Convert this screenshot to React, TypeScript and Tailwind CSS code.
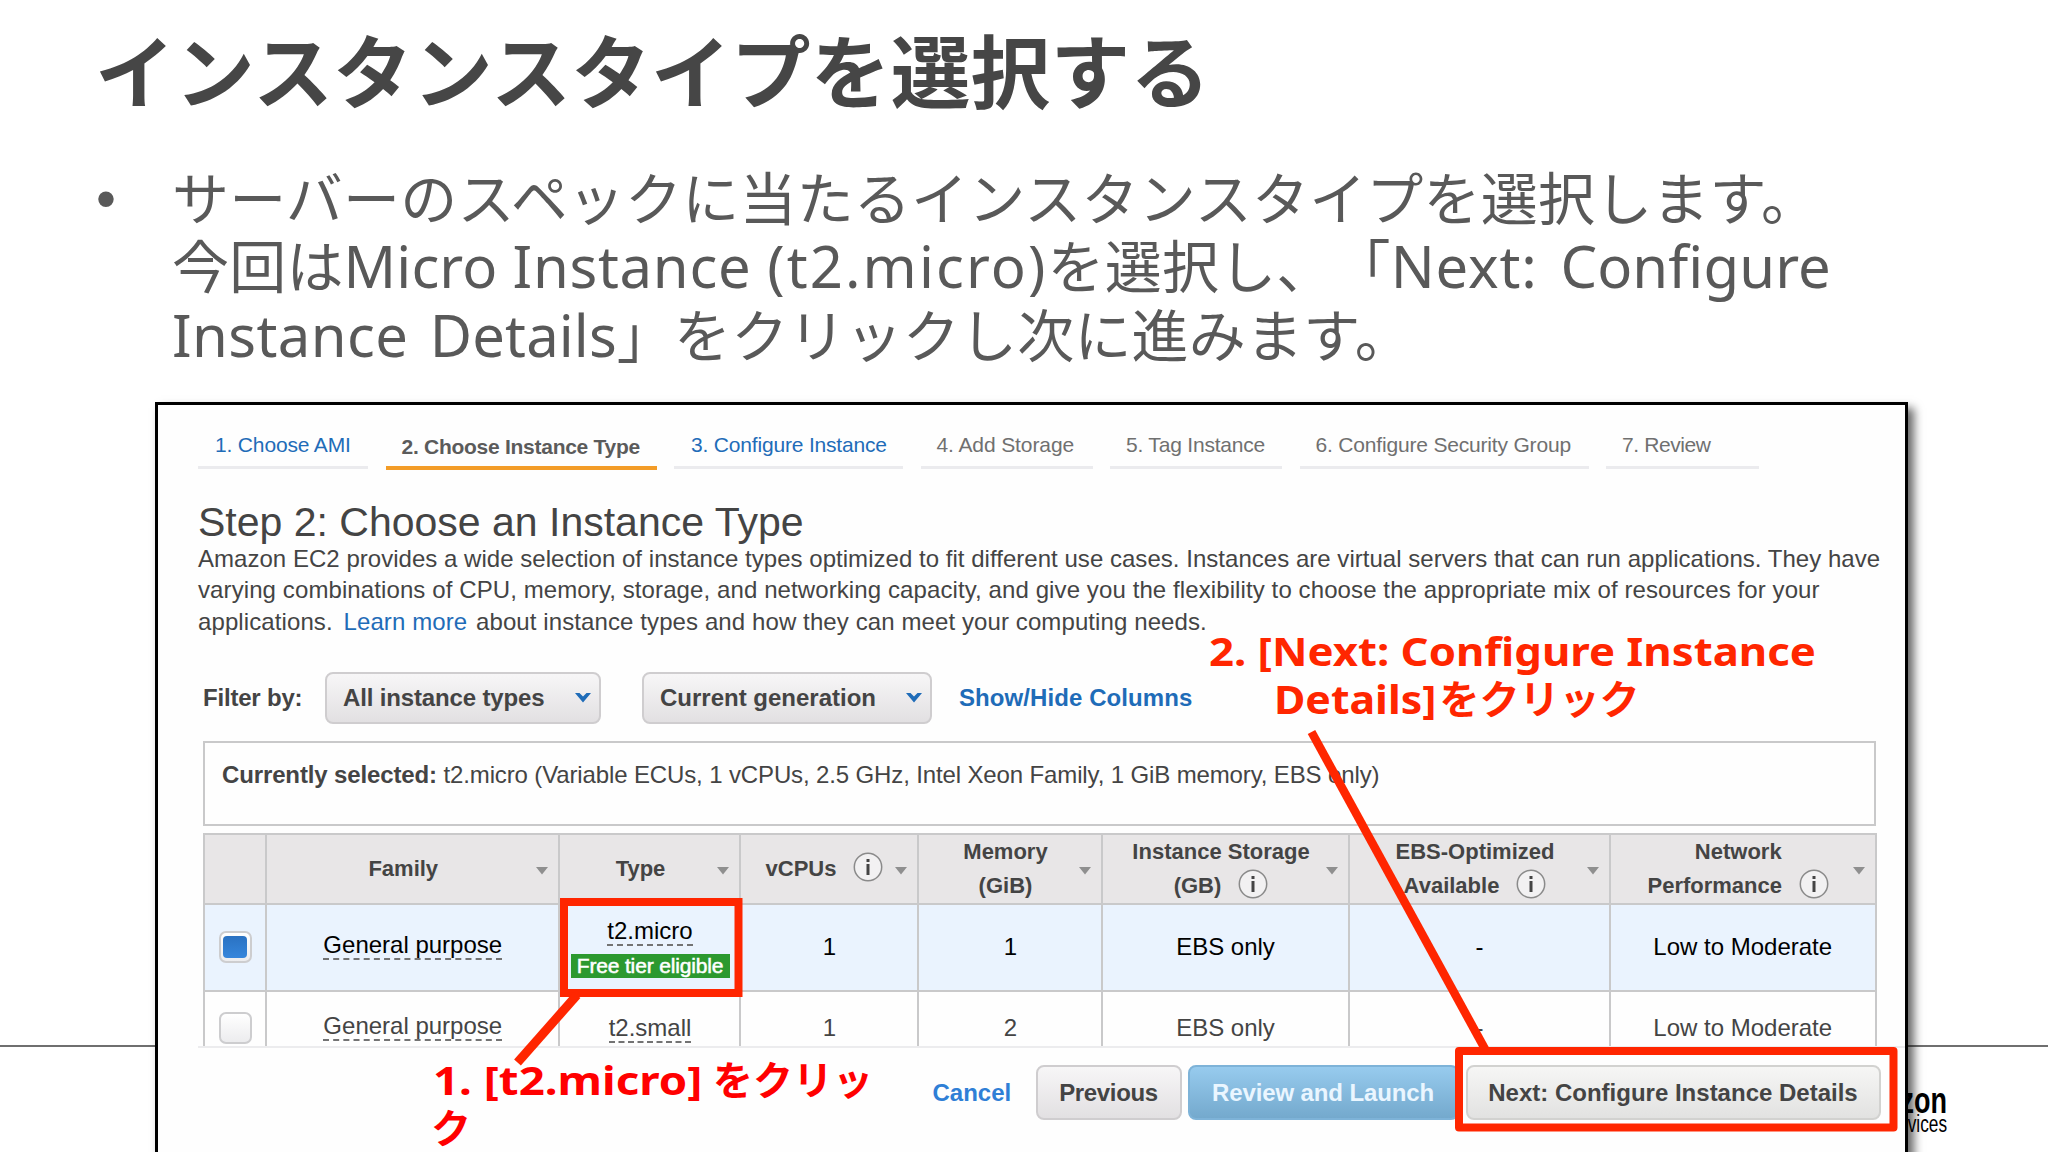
import { ReactNode } from "react";

const TABS = [
  { label: "1. Choose AMI", box: "w-[170px] pl-[17px]", text: "text-[#1f6cb8] tracking-[-0.16px]" },
  { label: "2. Choose Instance Type", box: "w-[271px] pl-[16px]", text: "text-[#5b5b5b] font-bold tracking-[-0.27px]", active: true },
  { label: "3. Configure Instance", box: "w-[229px] pl-[17px]", text: "text-[#1f6cb8] tracking-[-0.18px]" },
  { label: "4. Add Storage", box: "w-[172px] pl-[16px]", text: "text-[#707070] tracking-[-0.1px]" },
  { label: "5. Tag Instance", box: "w-[172px] pl-[16px]", text: "text-[#707070] tracking-[-0.2px]" },
  { label: "6. Configure Security Group", box: "w-[289px] pl-[16px]", text: "text-[#707070] tracking-[-0.18px]" },
  { label: "7. Review", box: "w-[153px] pl-[16px]", text: "text-[#707070] tracking-[-0.4px]" },
];

const GRID = "grid grid-cols-[62px_293.5px_181px_178px_184px_247px_261px_265.5px]";
const CELL = "border-r-2 border-[#c9c9ca]";
const BTN = "flex items-center justify-center rounded-[8px] pt-[1px] font-bold";
const GREY_BTN = "border-2 border-[#cfcdcf] bg-linear-to-b from-[#f7f6f7] to-[#e2e0e2] text-[#444]";

type Row = { family: string; type: string; free?: boolean; cpus: string; memory: string; storage: string; ebs: string; network: string };

const ROWS: Row[] = [
  { family: "General purpose", type: "t2.micro", free: true, cpus: "1", memory: "1", storage: "EBS only", ebs: "-", network: "Low to Moderate" },
  { family: "General purpose", type: "t2.small", cpus: "1", memory: "2", storage: "EBS only", ebs: "-", network: "Low to Moderate" },
];

function Info() {
  return (
    <svg className="-mt-[3px] ml-[17px] h-[30px] w-[30px] shrink-0" viewBox="0 0 30 30">
      <circle cx="15" cy="15" r="13.7" fill="#f2f1f2" stroke="#8a8a8a" strokeWidth="1.5" />
      <rect x="13.5" y="7" width="3" height="3" fill="#444" />
      <rect x="13.5" y="12" width="3" height="11" fill="#444" />
    </svg>
  );
}

function Caret() {
  return (
    <svg className="h-[10px] w-[16px] shrink-0" viewBox="0 0 16 10">
      <path d="M0 0H4.5L8 3.5L11.5 0H16L8 9.5Z" fill="#1f6cb8" />
    </svg>
  );
}

function Head({ lines, info }: { lines: string[]; info?: boolean }) {
  const pad = lines.length === 1 && !info ? "pr-[18px]" : "pr-[9px]";
  return (
    <div className={`${CELL} ${pad} relative flex flex-col items-center justify-center text-[22px] leading-[34px] font-bold text-[#444]`}>
      {lines.map((line, i) => (
        <div key={line} className="flex h-[34px] items-center whitespace-nowrap">
          {line}
          {info && i === lines.length - 1 && <Info />}
        </div>
      ))}
      <svg className="absolute top-[32px] right-[10px] h-[8px] w-[12px]" viewBox="0 0 12 8">
        <path d="M0 0H12L6 7.5Z" fill="#8f8f8f" />
      </svg>
    </div>
  );
}

function Dashed({ children }: { children: ReactNode }) {
  return <span className="border-b-2 border-dashed border-[#737373] leading-[26px]">{children}</span>;
}

function Checkbox({ checked }: { checked?: boolean }) {
  return (
    <span className="ml-[1px] flex h-[32px] w-[33px] items-center justify-center rounded-[7px] border-2 border-[#cdcdcf] bg-linear-to-b from-white to-[#ececee]">
      {checked && <span className="h-[22px] w-[24px] rounded-[4px] bg-linear-to-b from-[#2a72c2] to-[#3686dc]" />}
    </span>
  );
}

function InstanceRow({ row }: { row: Row }) {
  const center = `${CELL} flex items-center justify-center whitespace-nowrap`;
  return (
    <div className={`${GRID} ${row.free ? "h-[87px] border-b-2 border-[#c9c9ca] bg-[#eaf3fe] text-black" : "h-[72px] text-[#444]"}`}>
      <div className={center}>
        <Checkbox checked={row.free} />
      </div>
      <div className={`${center} pb-[2px] pl-[1px]`}>
        <Dashed>{row.family}</Dashed>
      </div>
      <div className={`${CELL} flex flex-col items-center justify-center pt-[2px] pl-[1px]`}>
        <Dashed>{row.type}</Dashed>
        {row.free && (
          <span className="mt-[8px] h-[24px] w-[159px] bg-[#2c992f] text-center text-[21px] leading-[24px] tracking-[-0.16px] text-white [-webkit-text-stroke:0.5px_white]">
            Free tier eligible
          </span>
        )}
      </div>
      <div className={`${center} pl-[1px]`}>{row.cpus}</div>
      <div className={`${center} pl-[1px]`}>{row.memory}</div>
      <div className={center}>{row.storage}</div>
      <div className={center}>{row.ebs}</div>
      <div className={center}>{row.network}</div>
    </div>
  );
}

function Console() {
  return (
    <div className="relative mt-[32.5px] ml-[155px] h-[800px] w-[1753px] shrink-0 border-3 border-black bg-[#fefefe] pt-[23px] pl-[40px] font-['Liberation_Sans',sans-serif] text-[24px] text-[#444] shadow-[6px_6px_9px_rgba(0,0,0,0.6)]">
      <ul className="flex items-start gap-[17.5px] text-[21px] whitespace-nowrap">
        {TABS.map((tab) => (
          <li
            key={tab.label}
            className={`${tab.box} ${tab.text} ${tab.active ? "h-[42px] border-b-4 border-[#f39c27] pt-[1px] leading-[35px]" : "h-[41px] border-b-3 border-[#ebebee] leading-[33px]"}`}
          >
            {tab.label}
          </li>
        ))}
      </ul>

      <h2 className="mt-[31px] text-[41px] leading-[42px]">Step 2: Choose an Instance Type</h2>
      <p className="leading-[31.7px] tracking-[0.03px] whitespace-nowrap">
        Amazon EC2 provides a wide selection of instance types optimized to fit different use cases. Instances are virtual servers that can run applications. They have
        <br />
        <span className="tracking-[0.1px]">
          varying combinations of CPU, memory, storage, and networking capacity, and give you the flexibility to choose the appropriate mix of resources for your
        </span>
        <br />
        <span className="tracking-[0.1px]">
          applications. <span className="mr-[2px] ml-[4px] text-[#1f6cb8]">Learn more</span> about instance types and how they can meet your computing needs.
        </span>
      </p>

      <div className="mt-[34px] flex h-[52px] items-center pl-[5px] font-bold whitespace-nowrap">
        <span className="w-[122px] pt-[1px] tracking-[-0.2px]">Filter by:</span>
        <div className={`${GREY_BTN} flex h-full w-[276px] items-center justify-between rounded-[8px] pr-[8px] pl-[16px] tracking-[-0.15px]`}>
          <span className="pt-[1px]">All instance types</span>
          <Caret />
        </div>
        <div className={`${GREY_BTN} ml-[41px] flex h-full w-[290px] items-center justify-between rounded-[8px] pr-[8px] pl-[16px]`}>
          <span className="pt-[1px]">Current generation</span>
          <Caret />
        </div>
        <span className="ml-[27px] pt-[1px] tracking-[0.08px] text-[#1f6cb8]">Show/Hide Columns</span>
      </div>

      <div className="mt-[17px] ml-[5px] h-[85px] w-[1673px] border-2 border-[#c9c9ca] pt-[16px] pl-[17px] leading-[32px] tracking-[-0.13px] whitespace-nowrap">
        <b>Currently selected:</b> t2.micro (Variable ECUs, 1 vCPUs, 2.5 GHz, Intel Xeon Family, 1 GiB memory, EBS only)
      </div>

      <div className="mt-[7px] h-[215px] overflow-hidden border-b-2 border-[#ececee] pl-[4.5px]">
        <div className="w-[1674px] border-t-2 border-l-2 border-[#c9c9ca]">
          <div className={`${GRID} h-[70px] border-b-2 border-[#c9c9ca] bg-[#e8e6e7]`}>
            <div className={CELL} />
            <Head lines={["Family"]} />
            <Head lines={["Type"]} />
            <Head lines={["vCPUs"]} info />
            <Head lines={["Memory", "(GiB)"]} />
            <Head lines={["Instance Storage", "(GB)"]} info />
            <Head lines={["EBS-Optimized", "Available"]} info />
            <Head lines={["Network", "Performance"]} info />
          </div>
          {ROWS.map((row) => (
            <InstanceRow key={row.type} row={row} />
          ))}
        </div>
      </div>

      <div className="mt-[17px] flex h-[55px] items-center pl-[734.5px] whitespace-nowrap">
        <span className="w-[103px] pt-[1px] font-bold text-[#2f7fd6]">Cancel</span>
        <div className={`${BTN} ${GREY_BTN} h-full w-[146px] tracking-[-0.35px]`}>Previous</div>
        <div className={`${BTN} ml-[6px] h-full w-[271px] border-2 border-[#7eb3d8] bg-linear-to-b from-[#97cbee] to-[#74a9cd] tracking-[-0.12px] text-[#eaf6ff]`}>
          Review and Launch
        </div>
        <div className={`${BTN} ml-[7px] h-full w-[415px] border-2 border-[#d2d2d0] bg-linear-to-b from-[#f6f6f5] to-[#e2e2e1]`}>Next: Configure Instance Details</div>
      </div>
    </div>
  );
}

export default function App() {
  return (
    <main className="relative flex h-[1152px] w-[2048px] flex-col overflow-hidden bg-white font-['Noto_Sans','Noto_Sans_CJK_JP',sans-serif]">
      {/* slide footer, partly hidden behind the console */}
      <div className="absolute top-[1045px] left-0 h-[1.5px] w-full bg-[#6f6f6f]" />
      <div className="absolute top-[1085px] right-[101px] origin-right scale-x-[0.75] text-right font-['Liberation_Sans',sans-serif] text-[36px] leading-[31px] font-bold text-black">
        amazon
        <div className="text-[23px] leading-[17px] font-normal">web services</div>
      </div>

      <h1 className="mt-[31px] ml-[95px] text-[79.7px] leading-[80px] font-bold tracking-[0.2px] text-[#464646]">インスタンスタイプを選択する</h1>

      <div className="mt-[52.5px] flex text-[57px] leading-[68.6px] tracking-[0.2px] whitespace-nowrap text-[#595959]">
        <span className="w-[172px] pl-[96px] font-['Liberation_Sans',sans-serif]">•</span>
        <p className="[text-spacing-trim:space-all]">
          サーバーのスペックに当たるインスタンスタイプを選択します。
          <br />
          今回は
          <span className="text-[58px]">
            <span className="tracking-[0.1px]">Micro </span>
            <span className="tracking-[0.7px]">Instance </span>
            <span className="tracking-[2.1px]">(t2.micro)</span>
          </span>
          を選択し、「
          <span className="text-[58px]">
            <span className="mr-[7px] tracking-[0.8px]">Next: </span>
            <span className="tracking-[0.1px]">Configure</span>
          </span>
          <br />
          <span className="text-[58px]">
            <span className="mr-[6px] tracking-[0.4px]">Instance </span>
            <span className="tracking-[0.1px]">Details</span>
          </span>
          」をクリックし次に進みます。
        </p>
      </div>

      <Console />

      {/* callouts */}
      <svg className="absolute inset-0 h-full w-full" viewBox="0 0 2048 1152" fill="none" stroke="#ff2600">
        <rect x="564" y="902" width="174.5" height="91" strokeWidth="8" />
        <path d="M577 995L517.5 1062.5" strokeWidth="9" />
        <path d="M1311.5 732L1485 1049" strokeWidth="8.5" />
        <rect x="1459" y="1051" width="434.5" height="76.5" strokeWidth="8" strokeLinejoin="round" />
      </svg>
      <div className="absolute top-[627px] left-[1209px] text-[40px] leading-[47.6px] font-bold whitespace-nowrap text-[#ff2600]">
        <div className="origin-left scale-x-[1.092]">2. [Next: Configure Instance</div>
        <div className="flex pl-[65px]">
          <span className="w-[165.5px] origin-left scale-x-[1.07]">Details]</span>をクリック
        </div>
      </div>
      <div className="absolute top-[1056px] left-[431px] text-[40px] leading-[47.6px] font-bold whitespace-nowrap text-[#ff0000]">
        <div className="flex pl-[2px]">
          <span className="w-[280px] origin-left scale-x-[1.14]">1. [t2.micro]</span>をクリッ
        </div>
        ク
      </div>
    </main>
  );
}
